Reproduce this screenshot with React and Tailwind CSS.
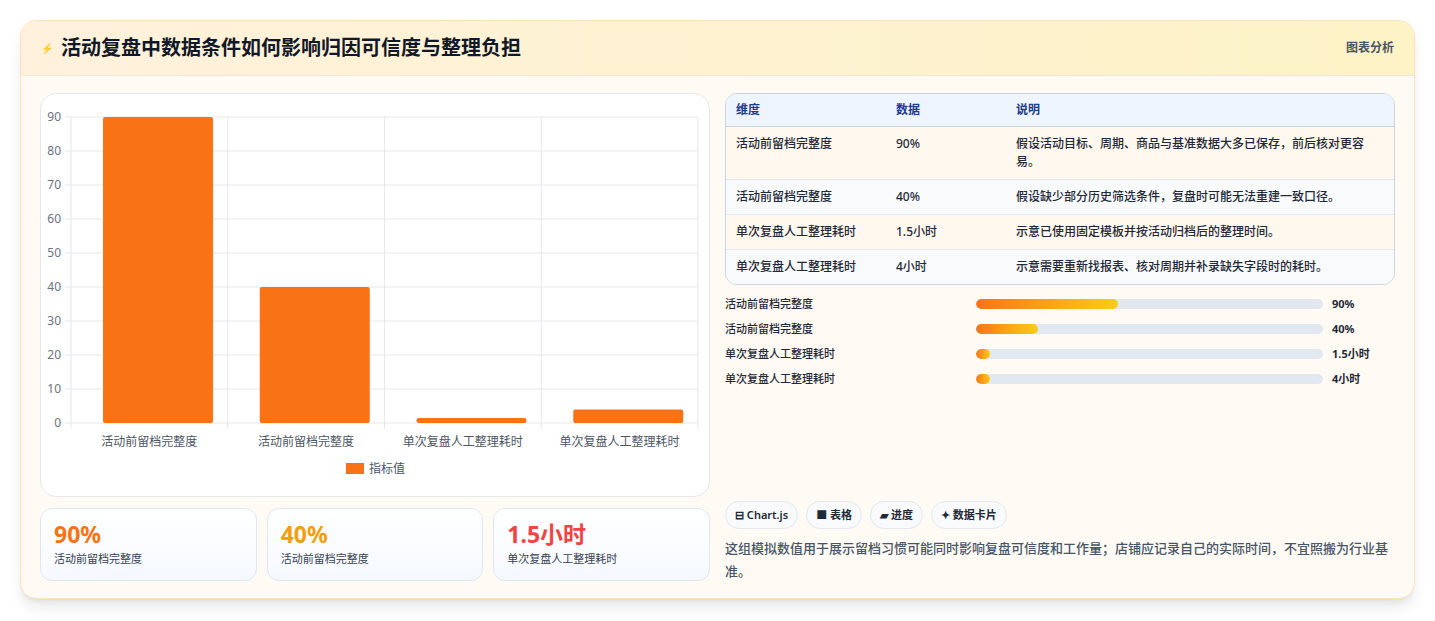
const font = { fontFamily: '"Noto Sans", "Noto Sans CJK SC", sans-serif' };

const bars = [
  { label: "活动前留档完整度", v: 90 },
  { label: "活动前留档完整度", v: 40 },
  { label: "单次复盘人工整理耗时", v: 1.5 },
  { label: "单次复盘人工整理耗时", v: 4 },
];

const rows = [
  ["活动前留档完整度", "90%", "假设活动目标、周期、商品与基准数据大多已保存，前后核对更容易。"],
  ["活动前留档完整度", "40%", "假设缺少部分历史筛选条件，复盘时可能无法重建一致口径。"],
  ["单次复盘人工整理耗时", "1.5小时", "示意已使用固定模板并按活动归档后的整理时间。"],
  ["单次复盘人工整理耗时", "4小时", "示意需要重新找报表、核对周期并补录缺失字段时的耗时。"],
];

const progress = [
  ["活动前留档完整度", 41, "90%"],
  ["活动前留档完整度", 18, "40%"],
  ["单次复盘人工整理耗时", 4, "1.5小时"],
  ["单次复盘人工整理耗时", 4, "4小时"],
];

function Chart() {
  const left = 30, right = 657, top = 23, bottom = 329;
  const step = (right - left) / 4;
  const y = (v) => bottom - ((bottom - top) * v) / 90;
  return (
    <svg width="670" height="404" className="block">
      {[0, 10, 20, 30, 40, 50, 60, 70, 80, 90].map((t) => (
        <g key={t}>
          <line x1={left - 6} x2={right} y1={y(t)} y2={y(t)} stroke="#e5e7eb" />
          <text x={left - 10} y={y(t) + 4} textAnchor="end" fontSize="12" fill="#6b7280">{t}</text>
        </g>
      ))}
      {[0, 1, 2, 3, 4].map((i) => (
        <line key={i} x1={left + step * i} x2={left + step * i} y1={top} y2={bottom + 6} stroke="#e5e7eb" />
      ))}
      {bars.map((b, i) => {
        const x = left + step * i + 32;
        return (
          <g key={i}>
            <rect x={x} y={y(b.v)} width="110" height={bottom - y(b.v)} rx="2" fill="#f97316" />
            <text x={left + step * i + step / 2} y="352" textAnchor="middle" fontSize="12" fill="#4b5563">{b.label}</text>
          </g>
        );
      })}
      <rect x="305" y="369" width="18" height="11" fill="#f97316" />
      <text x="328" y="379" fontSize="12" fill="#4b5563">指标值</text>
    </svg>
  );
}

export default function App() {
  return (
    <div className="w-[1435px] h-[621px] bg-white pt-5 px-5" style={font}>
      <div className="w-[1395px] h-[579px] rounded-2xl border border-[#fbe3c0] bg-[#fffaf3] shadow-lg overflow-hidden">
        <div className="h-[55px] flex items-center justify-between px-5 bg-gradient-to-r from-[#fff1dc] to-[#fdf3c6] border-b border-[#f3e6d3]">
          <div className="flex items-center gap-2">
            <span className="text-[10px] text-blue-500">⚡</span>
            <h1 className="text-[20px] font-bold text-[#111827]">活动复盘中数据条件如何影响归因可信度与整理负担</h1>
          </div>
          <span className="text-[12px] font-semibold text-[#4b5563]">图表分析</span>
        </div>
        <div className="flex gap-[15px] px-[19px] pt-[17px]">
          <div className="w-[670px] flex flex-col gap-[11px]">
            <div className="h-[404px] rounded-2xl border border-[#e5e7eb] bg-white overflow-hidden">
              <Chart />
            </div>
            <div className="flex gap-[10px]">
              {[["90%", "text-[#f97316]"], ["40%", "text-[#f59e0b]"], ["1.5小时", "text-[#ef4444]"]].map(([v, c], i) => (
                <div key={i} className="flex-1 h-[73px] rounded-xl border border-[#dbe7f5] bg-gradient-to-b from-white to-[#f5f9ff] px-[13px] pt-[10px]">
                  <div className={`text-[23px] font-bold leading-[30px] ${c}`}>{v}</div>
                  <div className="text-[11px] text-[#374151] mt-[2px]">{i === 2 ? "单次复盘人工整理耗时" : "活动前留档完整度"}</div>
                </div>
              ))}
            </div>
          </div>
          <div className="w-[670px] h-[490px] flex flex-col justify-between">
            <div>
              <div className="rounded-xl border border-[#cbd5e1] overflow-hidden text-[12px] font-medium text-[#1f2937]">
                <div className="flex h-[33px] items-center bg-[#eef5ff] border-b border-[#cbd5e1] font-semibold text-[#1e3a8a] px-[10px]">
                  <div className="w-[160px]">维度</div>
                  <div className="w-[120px]">数据</div>
                  <div>说明</div>
                </div>
                {rows.map((r, i) => (
                  <div key={i} className={`flex px-[10px] py-[8px] ${i % 2 ? "bg-[#f8fafc]" : "bg-[#fff8ee]"} ${i < 3 ? "border-b border-[#e2e8f0]" : ""}`}>
                    <div className="w-[160px] leading-[18px]">{r[0]}</div>
                    <div className="w-[120px] leading-[18px]">{r[1]}</div>
                    <div className="w-[355px] leading-[18px]">{r[2]}</div>
                  </div>
                ))}
              </div>
              <div className="mt-[10px] flex flex-col gap-[7px]">
                {progress.map(([l, w, v], i) => (
                  <div key={i} className="flex items-center h-[18px] text-[11px] font-medium text-[#1f2937]">
                    <div className="w-[251px]">{l}</div>
                    <div className="w-[347px] h-[10px] rounded-full bg-[#e2e8f0] overflow-hidden">
                      <div className="h-full rounded-full bg-gradient-to-r from-[#f97316] to-[#facc15]" style={{ width: `${w}%` }} />
                    </div>
                    <div className="ml-[9px] font-bold">{v}</div>
                  </div>
                ))}
              </div>
            </div>
            <div>
              <div className="flex gap-[8px]">
                {["⊟ Chart.js", "■ 表格", "▰ 进度", "✦ 数据卡片"].map((t) => (
                  <span key={t} className="h-[28px] px-[9px] flex items-center rounded-full border border-[#e2e8f0] bg-[#f8fafc] text-[11px] font-semibold text-[#1f2937]">{t}</span>
                ))}
              </div>
              <p className="mt-[8px] text-[13px] leading-[23px] text-[#475569] font-medium pr-[2px]">这组模拟数值用于展示留档习惯可能同时影响复盘可信度和工作量；店铺应记录自己的实际时间，不宜照搬为行业基准。</p>
            </div>
          </div>
        </div>
      </div>
    </div>
  );
}
